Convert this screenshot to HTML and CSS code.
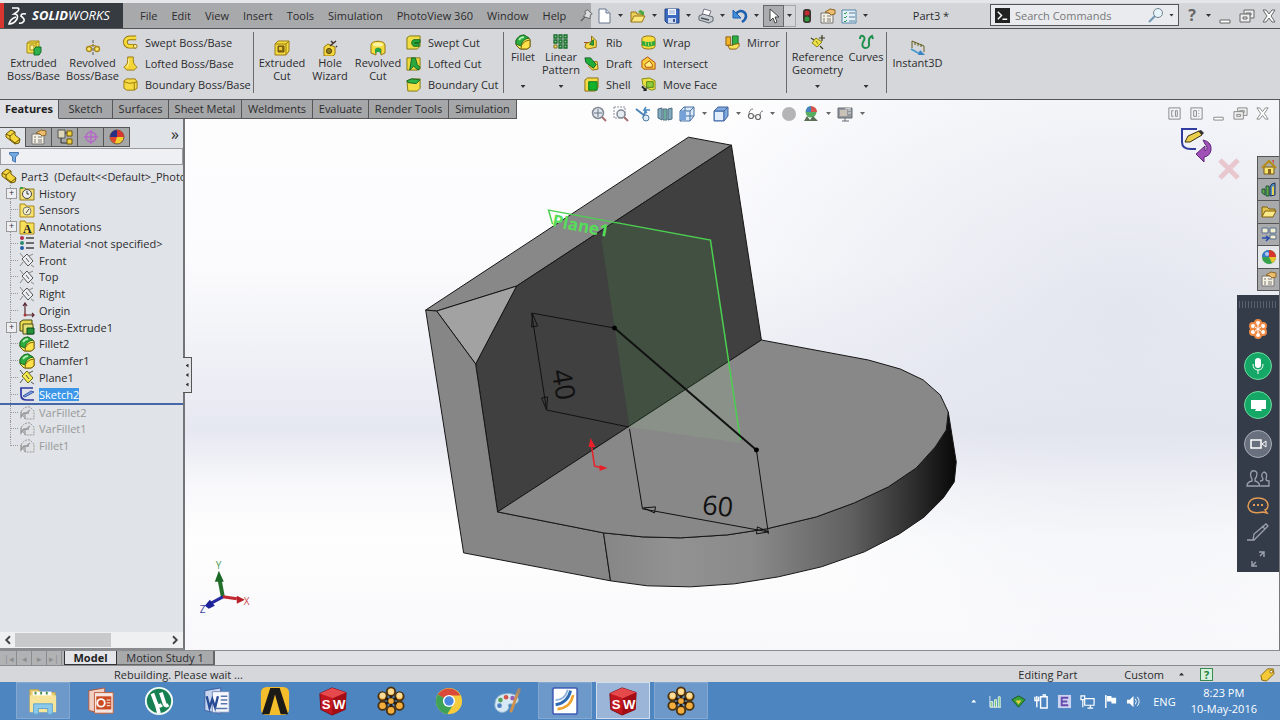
FILE: index.html
```html
<!DOCTYPE html>
<html lang="en">
<head>
    <meta charset="UTF-8">
    <meta name="viewport" content="width=device-width, initial-scale=1.0">
    <title>SolidWorks - Part3</title>
    <link rel="stylesheet" href="styles.css">
</head>
<body>
    <!-- Shared icons -->
    <svg class="sprite" aria-hidden="true">
        <symbol id="i-extrude" viewBox="0 0 16 16"><path d="M1 3l3-2h9v9l-3 3H1z" fill="#f3df4c" stroke="#a58a15"/><path d="M1 3h9v10M10 3l3-2" fill="none" stroke="#a58a15"/><path d="M4 5h4v5H4z" fill="#fbf3a0" stroke="#a58a15"/><path d="M8 9l2-2h5v5l-2 3H8z" fill="#2eb14c" stroke="#15702a"/></symbol>
        <symbol id="i-revolve" viewBox="0 0 16 16"><path d="M8 0v16" stroke="#555" stroke-dasharray="3 1"/><circle cx="4" cy="9" r="2.500" fill="#f8e96c" stroke="#a8821a" stroke-width="1.300"/><circle cx="12" cy="9" r="2.500" fill="#f8e96c" stroke="#a8821a" stroke-width="1.300"/><path d="M5 6q3-2 6 0" fill="none" stroke="#b8901a"/></symbol>
        <symbol id="i-sweep" viewBox="0 0 16 16"><path d="M14 3H7a4.500 4.500 0 0 0 0 9h7" fill="none" stroke="#96750e" stroke-width="5"/><path d="M14 3H7a4.500 4.500 0 0 0 0 9h7" fill="none" stroke="#f7dd3c" stroke-width="3"/><circle cx="13" cy="12" r="2" fill="#fbf0a0" stroke="#96750e"/></symbol>
        <symbol id="i-loft" viewBox="0 0 16 16"><path d="M5 1h6v3c0 4 1 5 4 8l-3 3H4l-3-3c3-3 4-4 4-8z" fill="#f4d538" stroke="#99770f"/><path d="M6 3v5l-2 4" fill="none" stroke="#fff6b0"/></symbol>
        <symbol id="i-bound" viewBox="0 0 16 16"><path d="M1 4l3-2h9l2 3v7l-3 2H4l-3-2z" fill="#f5da42" stroke="#99770f"/><path d="M1 5q6 3 11 1v8M12 6l3-1" fill="none" stroke="#99770f"/></symbol>
        <symbol id="i-cut" viewBox="0 0 16 16"><path d="M1 4l3-3h11v10l-3 4H1z" fill="#f5dc3e" stroke="#9c7b10"/><path d="M1 4h11v11M12 4l3-3" fill="none" stroke="#9c7b10"/><path d="M4 6h6v6H4z" fill="#917014" stroke="#6a5210"/><path d="M5 7h3v3H5z" fill="#e8c93a"/></symbol>
        <symbol id="i-hole" viewBox="0 0 16 16"><path d="M2 7l4-3 7 3v7l-2 2H2z" fill="#f5d740" stroke="#9c7b10"/><circle cx="7" cy="11" r="2.600" fill="#8e7a22" stroke="#5c4a0c"/><path d="M8 6l6-5M9 1l2 2M14 6l1 1" stroke="#43332c" stroke-width="1.500"/></symbol>
        <symbol id="i-revcut" viewBox="0 0 16 16"><path d="M1 5c0-5 14-5 14 0v8l-4 2V9H6v6l-5-2z" fill="#f5dc3e" stroke="#9c7b10"/><path d="M5 14V9q3-3 6 0v5l-2-2H7z" fill="#2ba544"/><ellipse cx="8" cy="4.500" rx="5" ry="2" fill="#fdf3a0"/></symbol>
        <symbol id="i-swcut" viewBox="0 0 16 16"><path d="M1 3l3-2h11v11l-3 3H1z" fill="#f0dc45" stroke="#7f7710"/><path d="M15 5H8q-4 3 0 7h6v-3H9V8h6z" fill="#25a83c" stroke="#116622"/></symbol>
        <symbol id="i-locut" viewBox="0 0 16 16"><path d="M1 2h14v12l-3 1H1z" fill="#f0d93d" stroke="#7f7710"/><path d="M6 2h4l2 7 3 3-2 3-5-4-4 4 1-7z" fill="#29a840" stroke="#116622"/></symbol>
        <symbol id="i-bocut" viewBox="0 0 16 16"><path d="M1 4l5-2h9v10l-3 3H2z" fill="#f4df46" stroke="#7f7710"/><path d="M1 4l5-2 9 1-4 4-9-1z" fill="#2fb247" stroke="#116622"/></symbol>
        <symbol id="i-fillet" viewBox="0 0 16 16"><path d="M1 6q3-5 8-5l6 4v8l-3 2H5l-4-4z" fill="#fae75c" stroke="#5f5a10"/><path d="M1 7q2-6 8-6l5 3q-7 1-8 8l-5-2z" fill="#2eac3f" stroke="#15702a"/><path d="M6 15q0-8 9-9v7l-3 2z" fill="#ffe24a" stroke="#7f6810"/><path d="M4 6q2-3 5-3" fill="none" stroke="#b9f0bb" stroke-width="1.500"/></symbol>
        <symbol id="i-pattern" viewBox="0 0 16 16"><g fill="#7fd08e" stroke="#176a2a" stroke-width="1.300"><path d="M1 1h3v3H1zM6 1h3v3H6zM11 1h3v3h-3zM1 6h3v3H1zM6 6h3v3H6zM11 6h3v3h-3zM6 11h3v3H6zM11 11h3v3h-3z"/></g><path d="M1 11h3v3H1z" fill="#f7e978" stroke="#7e6f16"/></symbol>
        <symbol id="i-rib" viewBox="0 0 16 16"><path d="M2 9l6-2V1l5 5v7l-9 2-3-2z" fill="#f5d948" stroke="#8e6c0e"/><path d="M6 10l4-5v6z" fill="#2fa943" stroke="#15702a"/><path d="M0 8h4" stroke="#a54315"/></symbol>
        <symbol id="i-draft" viewBox="0 0 16 16"><path d="M8 6h6l1 8-6 1-4-4z" fill="#f6dc46" stroke="#8e6c0e"/><path d="M1 2h6l6 7-3 4-8-6z" fill="#1fae3a" stroke="#126124"/></symbol>
        <symbol id="i-shell" viewBox="0 0 16 16"><path d="M1 3l3-2h11v10l-3 4H1z" fill="#f4dc42" stroke="#8e6c0e"/><path d="M5 5h9v9H5z" fill="#14b32b" stroke="#0f7420"/></symbol>
        <symbol id="i-wrap" viewBox="0 0 16 16"><path d="M1 4c0-4 14-4 14 0v8c0 4-14 4-14 0z" fill="#f8dd3c" stroke="#8e6c0e"/><path d="M1 6q7 3 14 0v5q-7 3-14 0z" fill="#2fa93c"/><path d="M5 7v4M8 8v4M11 7v4" stroke="#bddd55"/></symbol>
        <symbol id="i-inter" viewBox="0 0 16 16"><path d="M1 5l6-4 8 6v7H3l-2-2z" fill="#f7cf3a" stroke="#b0470e"/><path d="M4 9l5-4 3 4v3H5z" fill="#ffef84" stroke="#b0470e"/></symbol>
        <symbol id="i-move" viewBox="0 0 16 16"><path d="M1 2l8-1 6 3v9l-4 1-6-3-3-3z" fill="#ecdf42" stroke="#7e8a10"/><path d="M6 5h7v6H6z" fill="#8fce39" stroke="#4c7f17"/><path d="M1 10l4 4" stroke="#222" stroke-width="2"/><path d="M2 15h4v-4z" fill="#222"/></symbol>
        <symbol id="i-mirror" viewBox="0 0 16 16"><path d="M1 2h5v9H1z" fill="#f2b52a" stroke="#8f5b0b"/><path d="M8 1h6v8l-2 2H8z" fill="#2fae43" stroke="#15702a"/><path d="M3 11h5l2-1 5-1v3l-3 3H5z" fill="#f9e35a" stroke="#8f5b0b"/></symbol>
        <symbol id="i-refgeo" viewBox="0 0 16 16"><path d="M6 4l6 4-5 5-5-4z" fill="#ece248" stroke="#8b8213"/><path d="M1 4l3 2M10 12l3 3M12 1v6M9 4h6" stroke="#3d3d20" stroke-width="1.200"/><path d="M6 7l2 3" stroke="#8b8213"/></symbol>
        <symbol id="i-curve" viewBox="0 0 16 16"><path d="M2 5q0-4 3-3 3 2 0 6-2 5 2 6 5 0 4-5-1-5 3-7l1 3" fill="none" stroke="#1f8f4c" stroke-width="2"/></symbol>
        <symbol id="i-instant" viewBox="0 0 16 16"><path d="M2 8V1l12 5v6M5 2v3M8 3v3M11 4v3" fill="none" stroke="#655c1c"/><path d="M1 9l9 5" stroke="#4a9ad0" stroke-width="2"/><path d="M10 10l5 5H8z" fill="#3a86c4"/></symbol>
        <symbol id="i-new" viewBox="0 0 16 16"><path d="M3 1h7l4 4v10H3z" fill="#fff" stroke="#68778d"/><path d="M10 1v4h4" fill="#cddcee" stroke="#68778d"/></symbol>
        <symbol id="i-open" viewBox="0 0 16 16"><path d="M1 14V4h5l1 2h6v3" fill="#ead05a" stroke="#987416"/><path d="M1 14l3-6h11l-3 6z" fill="#fbe77e" stroke="#987416"/><path d="M8 4q3-4 5 0l1-1v4h-4l2-1" fill="#47a83c"/></symbol>
        <symbol id="i-openfolder" viewBox="0 0 16 16"><path d="M1 13V3h5l2 2h6v3" fill="#e2c34f" stroke="#806010"/><path d="M1 13l3-6h11l-3 6z" fill="#fbe98a" stroke="#806010"/></symbol>
        <symbol id="i-save" viewBox="0 0 16 16"><path d="M1 1h14v14H3l-2-2z" fill="#3b6bc0" stroke="#25437e"/><path d="M4 1h8v6H4z" fill="#f3f6fc"/><path d="M5 3h6M5 5h6" stroke="#93a9cf"/><path d="M4 10h8v5H4z" fill="#cdd9ee"/><path d="M9 11h2v3H9z" fill="#3b5489"/></symbol>
        <symbol id="i-print" viewBox="0 0 16 16"><path d="M4 7l2-6 7 2-2 5z" fill="#fff" stroke="#778"/><path d="M1 8l4-2 10 3v4l-4 2-10-3z" fill="#c7cbd2" stroke="#5f656e"/><path d="M3 10l8 2" stroke="#4d5258" stroke-width="1.500"/></symbol>
        <symbol id="i-undo" viewBox="0 0 16 16"><path d="M3 7q5-7 10-2 3 5-3 9" fill="none" stroke="#1d5eae" stroke-width="2.500"/><path d="M1 2v8h8z" fill="#408fd9" stroke="#1d5eae"/></symbol>
        <symbol id="i-arrow" viewBox="0 0 16 16"><path d="M4 1v12l3-3 2 5 2-1-2-5h4z" fill="#fff" stroke="#444"/></symbol>
        <symbol id="i-light" viewBox="0 0 16 16"><rect x="4" y="1" width="8" height="14" rx="3" fill="#3b342e"/><circle cx="8" cy="5" r="2.500" fill="#c02b2f"/><circle cx="8" cy="11" r="2.500" fill="#2c9a3d"/></symbol>
        <symbol id="i-props" viewBox="0 0 16 16"><path d="M1 5h12v10H1z" fill="#f4f0e2" stroke="#777"/><path d="M3 8h2M7 8h4M3 11h2M7 11h4M3 13h2M7 13h4" stroke="#7b7b7b"/><path d="M5 4l5-3 5 1v4l-4 1-2-2z" fill="#ecbd6e" stroke="#8e6726"/></symbol>
        <symbol id="i-options" viewBox="0 0 16 16"><path d="M1 2h14v13H1z" fill="#e4f0f8" stroke="#5786a7"/><path d="M3 5l1 1 2-2M3 9l1 1 2-2M3 13l1 1 2-2" fill="none" stroke="#2c9a4d"/><path d="M8 5h6M8 9h6M8 13h6" stroke="#5d7f9c"/></symbol>
        <symbol id="i-glass" viewBox="0 0 16 16"><circle cx="10" cy="6" r="4.500" fill="#e6f4fb" stroke="#75838e"/><path d="M7 9l-6 6" stroke="#6e97b4" stroke-width="2"/></symbol>
        <symbol id="i-zoomfit" viewBox="0 0 16 16"><circle cx="7" cy="7" r="5.500" fill="#dfe6ee" stroke="#808893" stroke-width="1.500"/><path d="M7 3v8M3 7h8" stroke="#687280"/><path d="M11 11l4 4" stroke="#a66f6f" stroke-width="2"/></symbol>
        <symbol id="i-zoomarea" viewBox="0 0 16 16"><path d="M1 1h11v11H1z" fill="none" stroke="#8a919b" stroke-dasharray="2 1"/><circle cx="8" cy="8" r="4" fill="#e6ecf3" stroke="#808893" stroke-width="1.500"/><path d="M11 11l4 4" stroke="#a66f6f" stroke-width="2"/></symbol>
        <symbol id="i-prev" viewBox="0 0 16 16"><path d="M1 3l9 7M8 12l3-8" stroke="#4e83b5" stroke-width="2"/><circle cx="11" cy="12" r="3" fill="#dcebf7" stroke="#5079a2"/><path d="M15 4H9l2-3M9 4l3 3" fill="none" stroke="#4a8bc4" stroke-width="1.500"/></symbol>
        <symbol id="i-section" viewBox="0 0 16 16"><path d="M1 3l4-1v12l-4-2zM6 3h4v11H6zM11 3l4-1v11l-4 1z" fill="#84a9bf" stroke="#4d6e80"/><path d="M7 4h2v9H7z" fill="#69ad98"/></symbol>
        <symbol id="i-orient" viewBox="0 0 16 16"><path d="M1 5l4-4h10v9l-4 5H1z" fill="#dbe8f7" stroke="#4570a3"/><path d="M1 5h10v10M11 5l4-4M6 1v9l-5 5M6 10h9" stroke="#4570a3" fill="none"/><path d="M1 5h6v9H1z" fill="#74a1d8"/></symbol>
        <symbol id="i-cube" viewBox="0 0 16 16"><path d="M1 5l4-4h10v9l-4 5H1z" fill="#7fa9df" stroke="#41649a"/><path d="M1 5h10v10M11 5l4-4" stroke="#41649a" fill="none"/><path d="M2 6h8v8H2z" fill="#e1edfa"/></symbol>
        <symbol id="i-glasses" viewBox="0 0 16 16"><circle cx="4" cy="10" r="2.500" fill="none" stroke="#666" stroke-width="1.200"/><circle cx="11" cy="11" r="2.500" fill="none" stroke="#666" stroke-width="1.200"/><path d="M2 9q0-6 4-6M13 10q0-5 3-5M6 10h3" fill="none" stroke="#777"/></symbol>
        <symbol id="i-ball" viewBox="0 0 16 16"><circle cx="8" cy="8" r="7" fill="#b4b4b6"/></symbol>
        <symbol id="i-colors" viewBox="0 0 16 16"><circle cx="8" cy="8" r="7" fill="#f4ce2f" stroke="#6c5140"/><path d="M8 8V1a7 7 0 0 1 7 7z" fill="#d8352f"/><path d="M8 8V1a7 7 0 0 0-7 7z" fill="#252f83"/><path d="M8 8H1a7 7 0 0 0 5 6z" fill="#e04634"/></symbol>
        <symbol id="i-globe" viewBox="0 0 16 16"><circle cx="8" cy="8" r="7" fill="#36a24c"/><path d="M8 8V1a7 7 0 0 1 7 7z" fill="#d8352f"/><path d="M8 8V1a7 7 0 0 0-7 7z" fill="#3a78cf"/><path d="M8 8h7a7 7 0 0 1-4 6z" fill="#e8c32f"/><circle cx="6" cy="5" r="2" fill="#fff" fill-opacity=".6"/></symbol>
        <symbol id="i-scene" viewBox="0 0 16 16"><circle cx="8" cy="6" r="5.500" fill="#59ad60"/><path d="M8 6V0q-5 0-5 6z" fill="#4383c2"/><path d="M8 6V0q6 1 6 6z" fill="#d5544c"/><path d="M1 15l3-5 3 4 3-4 5 5z" fill="#5c6e53"/></symbol>
        <symbol id="i-monitor" viewBox="0 0 16 16"><path d="M1 2h14v10H1z" fill="#92989e" stroke="#646a70"/><path d="M3 4h7v6H3z" fill="#c9c2b6"/><path d="M11 4h3M11 7h3M8 3l6-1" stroke="#ddd"/><path d="M5 15h7M8 12v3" stroke="#646a70" fill="none"/></symbol>
        <symbol id="i-min" viewBox="0 0 16 16"><path d="M3 12h10v3H3z" fill="#fff" stroke="currentColor"/></symbol>
        <symbol id="i-restore" viewBox="0 0 16 16"><path d="M5 2h10v8H5zM7 5h5v2H7z" fill="#eee" stroke="currentColor"/><path d="M1 6h10v8H1zM4 9h4v2H4z" fill="#eee" stroke="currentColor"/></symbol>
        <symbol id="i-close" viewBox="0 0 16 16"><path d="M2 2h3l3 4 3-4h3l-4 6 4 6h-3l-3-4-3 4H2l4-6z" fill="#fff" stroke="currentColor"/></symbol>
        <symbol id="i-paneL" viewBox="0 0 16 16"><path d="M2 2h12v12H2z" fill="none" stroke="currentColor"/><path d="M7 5H5v6h2M9 5h2v6H9z" fill="none" stroke="currentColor"/></symbol>
        <symbol id="i-paneR" viewBox="0 0 16 16"><path d="M2 2h12v12H2z" fill="none" stroke="currentColor"/><path d="M5 5h3v6H5zM10 5h1M10 8h1M10 11h1" fill="none" stroke="currentColor"/></symbol>
        <symbol id="i-part" viewBox="0 0 16 16"><path d="M1 5l5-4 4 2v3l5 4-1 4-4 1-9-7z" fill="#f5d63b" stroke="#6c5708"/><path d="M1 5l4 2 5-4M5 7v3l5 4 5-4M10 14v1" fill="none" stroke="#6c5708"/></symbol>
        <symbol id="i-config" viewBox="0 0 16 16"><path d="M1 1h7v8H1z" fill="#ded9bd" stroke="#555"/><path d="M4 9v5h6M8 4h3" fill="none" stroke="#333"/><path d="M10 2h5v5h-5zM10 10h5v5h-5z" fill="#f0d341" stroke="#6c5708"/></symbol>
        <symbol id="i-target" viewBox="0 0 16 16"><circle cx="8" cy="8" r="5" fill="none" stroke="#b568c8" stroke-width="1.500"/><path d="M8 1v14M1 8h14" stroke="#b568c8" stroke-width="1.500"/></symbol>
        <symbol id="i-filter" viewBox="0 0 16 16"><path d="M2 2h12v2L10 8v7l-4-2V8L2 4z" fill="#6fa9e0" stroke="#2a5b9c"/></symbol>
        <symbol id="i-history" viewBox="0 0 16 16"><path d="M1 3h5l1 1h8v11H1z" fill="#f4df6e" stroke="#8d7a24"/><circle cx="8" cy="9" r="4.500" fill="#eee" stroke="#444"/><path d="M8 6v3h2" fill="none" stroke="#333"/><path d="M1 2h3v2H1z" fill="#35a048"/></symbol>
        <symbol id="i-sensor" viewBox="0 0 16 16"><path d="M1 2h5l1 2h8v11H1z" fill="#f7e36e" stroke="#a8861e"/><circle cx="8" cy="9" r="4" fill="#f4f0cf" stroke="#7b7b6d"/><path d="M7 11l3-4" stroke="#444"/></symbol>
        <symbol id="i-folder" viewBox="0 0 16 16"><path d="M1 2h5l1 2h8v11H1z" fill="#f7e05a" stroke="#a8861e"/></symbol>
        <symbol id="i-material" viewBox="0 0 16 16"><circle cx="3" cy="3" r="2" fill="#b12d4a"/><circle cx="3" cy="8" r="2" fill="#2c8c72"/><circle cx="3" cy="13" r="2" fill="#255fa8"/><path d="M7 3h8M7 8h8M7 13h8" stroke="#444" stroke-width="1.500"/></symbol>
        <symbol id="i-plane" viewBox="0 0 16 16"><path d="M8 2l6 7-5 5-6-7z" fill="#eceff1" stroke="#555"/><path d="M1 1l3 4M12 13l3 2M14 2l-4 2M1 14l3-4" stroke="#888"/><path d="M7 6l3 4" stroke="#555"/></symbol>
        <symbol id="i-planeY" viewBox="0 0 16 16"><path d="M8 2l6 7-5 5-6-7z" fill="#f2ea4d" stroke="#6d6716"/><path d="M1 1l3 4M12 13l3 2M14 2l-4 2M1 14l3-4M7 6l3 4" stroke="#555"/></symbol>
        <symbol id="i-origin" viewBox="0 0 16 16"><path d="M6 2v11h9M4 4l2-3 2 3M13 11l2 2-2 2" fill="none" stroke="#5b2731" stroke-width="1.200"/><circle cx="6" cy="13" r="1.500" fill="#a33"/></symbol>
        <symbol id="i-boss" viewBox="0 0 16 16"><path d="M1 3l3-2h9v11H1z" fill="#e9da52" stroke="#4a4a13"/><path d="M4 5h10v10H4z" fill="#e5df78" stroke="#4a4a13"/><path d="M8 9h7v6H8z" fill="#26903b" stroke="#0d4e1b"/></symbol>
        <symbol id="i-sketch" viewBox="0 0 16 16"><path d="M14 2H2v7q0 5 6 5h7" fill="none" stroke="#2d37a3" stroke-width="1.700"/><path d="M4 10l8-5 3 1-9 5z" fill="#7da1df" stroke="#3e5baa"/></symbol>
        <symbol id="i-ghost" viewBox="0 0 16 16"><path d="M2 7q3-6 9-5l4 4v8H6z" fill="#dfe1e4" stroke="#999" stroke-dasharray="2 1"/><path d="M2 7v5l3-4h5M6 14V9l5-4" fill="none" stroke="#999" stroke-width="1.300"/></symbol>
        <symbol id="i-house" viewBox="0 0 16 16"><path d="M3 8h10v7H3z" fill="#f8e36b" stroke="#775812"/><path d="M1 9l7-7 7 7" fill="none" stroke="#b58c16" stroke-width="2"/><path d="M7 10h3v5H7z" fill="#8c6420"/><path d="M11 1h2v4z" fill="#c44"/></symbol>
        <symbol id="i-books" viewBox="0 0 16 16"><path d="M1 8h3v6l-3-2zM5 5h3v10H5z" fill="#60a843" stroke="#254"/><path d="M9 15V6q1-4 5-4v12z" fill="#4f8cc4" stroke="#235"/><path d="M11 14V6l2-1v9z" fill="#e8d352"/></symbol>
        <symbol id="i-viewpal" viewBox="0 0 16 16"><path d="M1 2h6v5H1zM9 2h6v5H9zM9 9h6v4H9z" fill="#f4efcc" stroke="#546c91"/><path d="M1 12h6M5 10l3 2-3 3" stroke="#2b4cae" stroke-width="1.500" fill="none"/></symbol>
        <symbol id="i-flower" viewBox="0 0 32 32"><g fill="#f4ae3b" stroke="#4a3416" stroke-width="2"><circle cx="16" cy="6" r="4.500"/><circle cx="25" cy="11" r="4.500"/><circle cx="25" cy="21" r="4.500"/><circle cx="16" cy="26" r="4.500"/><circle cx="7" cy="21" r="4.500"/><circle cx="7" cy="11" r="4.500"/></g><g fill="#fbdc98"><circle cx="16" cy="6" r="3"/><circle cx="7" cy="10" r="3"/><circle cx="25" cy="10" r="3"/></g><path d="M16 10v12M10 13l12 6M22 13l-12 6" stroke="#2b1c0d" stroke-width="3"/><circle cx="16" cy="16" r="3" fill="#f4ae3b"/></symbol>
        <symbol id="i-swbox" viewBox="0 0 32 32"><path d="M2 8l13-6 15 5-1 18-14 6L3 25z" fill="#c31720" stroke="#7b0b12"/><path d="M2 8l13-6 15 5-14 6z" fill="#e6494c"/><path d="M16 13l14-6-1 18-14 6z" fill="#a30d16"/></symbol>
    </svg>

    <div class="app">
        <!-- Title bar -->
        <header class="titlebar">
            <div class="brand">
                <svg class="brand-mark" viewBox="0 0 20 20"><path d="M4 2h6q2 1-1 4l-3 2q5 0 3 5-3 5-8 5 1-5 7-7M18 8q-5-1-5 2 4 3 3 5-2 3-5 2" fill="none" stroke="#fff" stroke-width="1.600"/></svg>
                <span class="brand-name"><b>SOLID</b>WORKS</span>
            </div>
            <nav class="menu">
                <button>File</button>
                <button>Edit</button>
                <button>View</button>
                <button>Insert</button>
                <button>Tools</button>
                <button>Simulation</button>
                <button>PhotoView 360</button>
                <button>Window</button>
                <button>Help</button>
                <svg class="pin" viewBox="0 0 16 16"><path d="M9 1l6 5-2 1-1 5-8-3 3-3-1-3z" fill="#ddd" stroke="#555"/><path d="M6 10l-5 5" stroke="#555" stroke-width="1.500"/></svg>
            </nav>
            <div class="quick">
                <button aria-label="New"><svg class="icon"><use href="#i-new"/></svg></button><i class="caret"></i>
                <button aria-label="Open"><svg class="icon"><use href="#i-open"/></svg></button><i class="caret"></i>
                <button aria-label="Save"><svg class="icon"><use href="#i-save"/></svg></button><i class="caret"></i>
                <button aria-label="Print"><svg class="icon"><use href="#i-print"/></svg></button><i class="caret"></i>
                <button aria-label="Undo"><svg class="icon"><use href="#i-undo"/></svg></button><i class="caret"></i>
                <button class="pressed" aria-label="Select"><svg class="icon"><use href="#i-arrow"/></svg></button><span class="boxed"><i class="caret"></i></span>
                <button aria-label="Rebuild"><svg class="icon"><use href="#i-light"/></svg></button>
                <button aria-label="Properties"><svg class="icon"><use href="#i-props"/></svg></button>
                <button aria-label="Options"><svg class="icon"><use href="#i-options"/></svg></button><i class="caret"></i>
            </div>
            <div class="doc-title">Part3 *</div>
            <div class="search">
                <svg class="prompt" viewBox="0 0 16 16"><path d="M0 0h16v16H0z" fill="#222"/><path d="M3 4l4 4-4 4M8 12h5" fill="none" stroke="#fff" stroke-width="1.500"/></svg>
                <input type="text" aria-label="Search Commands" placeholder="Search Commands">
                <svg class="icon"><use href="#i-glass"/></svg><i class="caret"></i>
            </div>
            <div class="win-controls">
                <button class="help-mark" aria-label="Help">?</button><i class="caret"></i>
                <button aria-label="Minimize"><svg class="icon"><use href="#i-min"/></svg></button>
                <button aria-label="Restore"><svg class="icon"><use href="#i-restore"/></svg></button>
                <button aria-label="Close"><svg class="icon"><use href="#i-close"/></svg></button>
            </div>
        </header>

        <!-- Ribbon -->
        <section class="ribbon">
            <div class="group">
                <button class="big mid wide"><svg class="icon"><use href="#i-extrude"/></svg>Extruded<br>Boss/Base</button>
                <button class="big mid wide"><svg class="icon"><use href="#i-revolve"/></svg>Revolved<br>Boss/Base</button>
                <div class="stack stack-xl">
                    <button><svg class="icon"><use href="#i-sweep"/></svg>Swept Boss/Base</button>
                    <button><svg class="icon"><use href="#i-loft"/></svg>Lofted Boss/Base</button>
                    <button><svg class="icon"><use href="#i-bound"/></svg>Boundary Boss/Base</button>
                </div>
            </div>
            <div class="group">
                <button class="big mid"><svg class="icon"><use href="#i-cut"/></svg>Extruded<br>Cut</button>
                <button class="big mid"><svg class="icon"><use href="#i-hole"/></svg>Hole<br>Wizard</button>
                <button class="big mid"><svg class="icon"><use href="#i-revcut"/></svg>Revolved<br>Cut</button>
                <div class="stack stack-l">
                    <button><svg class="icon"><use href="#i-swcut"/></svg>Swept Cut</button>
                    <button><svg class="icon"><use href="#i-locut"/></svg>Lofted Cut</button>
                    <button><svg class="icon"><use href="#i-bocut"/></svg>Boundary Cut</button>
                </div>
            </div>
            <div class="group">
                <button class="big narrow"><svg class="icon"><use href="#i-fillet"/></svg>Fillet<i class="caret"></i></button>
                <button class="big narrow"><svg class="icon"><use href="#i-pattern"/></svg>Linear<br>Pattern<i class="caret"></i></button>
                <div class="stack stack-s">
                    <button><svg class="icon"><use href="#i-rib"/></svg>Rib</button>
                    <button><svg class="icon"><use href="#i-draft"/></svg>Draft</button>
                    <button><svg class="icon"><use href="#i-shell"/></svg>Shell</button>
                </div>
                <div class="stack stack-m">
                    <button><svg class="icon"><use href="#i-wrap"/></svg>Wrap</button>
                    <button><svg class="icon"><use href="#i-inter"/></svg>Intersect</button>
                    <button><svg class="icon"><use href="#i-move"/></svg>Move Face</button>
                </div>
                <div class="stack stack-r">
                    <button><svg class="icon"><use href="#i-mirror"/></svg>Mirror</button>
                </div>
            </div>
            <div class="group">
                <button class="big wide"><svg class="icon"><use href="#i-refgeo"/></svg>Reference<br>Geometry<i class="caret"></i></button>
                <button class="big narrow"><svg class="icon"><use href="#i-curve"/></svg>Curves<i class="caret"></i></button>
            </div>
            <div class="group">
                <button class="big mid wide"><svg class="icon"><use href="#i-instant"/></svg>Instant3D</button>
            </div>
        </section>

        <main class="workspace">
            <!-- Graphics area -->
            <div class="viewport">
                <svg class="model" viewBox="0 100 1280 550">
                    <defs>
                        <linearGradient id="rim" gradientUnits="userSpaceOnUse" x1="605" y1="0" x2="957" y2="0">
                            <stop offset="0" stop-color="#868686"/>
                            <stop offset=".2" stop-color="#929292"/>
                            <stop offset=".42" stop-color="#8a8a8a"/>
                            <stop offset=".7" stop-color="#606060"/>
                            <stop offset=".87" stop-color="#303030"/>
                            <stop offset="1" stop-color="#080808"/>
                        </linearGradient>
                    </defs>
                    <g stroke="#151515" stroke-linejoin="round">
                        <path d="M426 310L689 137L732 145L517 286L437 311z" fill="#888"/>
                        <path d="M732 145L762 340L498 512L476 364L517 286z" fill="#404040"/>
                        <path d="M437 311L517 286L476 364z" fill="#a2a2a2"/>
                        <path d="M426 310L437 311L476 364L498 512L604 533L611 581L464 553z" fill="#868686"/>
                        <path d="M604 533L643 537L681 538L728 535L767 529L817 517L855 503L889 487L917 468L936 447L947 430L949 412L957 462L955 482L944 498L925 517L900 534L865 552L822 567L779 577L735 584L691 587L648 586L611 581z" fill="url(#rim)"/>
                        <path d="M498 512L762 340L869 360L901 369L924 380L941 395L949 412L947 430L936 447L917 468L889 487L855 503L817 517L767 529L728 535L681 538L643 537L604 533z" fill="#888"/>
                    </g>
                    <!-- Reference plane -->
                    <path d="M602 240L610 222L711 240L729 362L630 427z" fill="#46b446" fill-opacity=".14"/>
                    <path d="M630 427L729 362L741 443z" fill="#8fd08f" fill-opacity=".13"/>
                    <path d="M553 224L549 210L711 240L741 440" fill="none" stroke="#4ccf50" stroke-width="1.500"/>
                    <text class="plane-label" transform="translate(552 226) rotate(11)">Plane1</text>
                    <!-- Sketch and dimensions -->
                    <g fill="none" stroke="#111">
                        <path d="M615 328L532 313L547 410L629 427M630 429L643 509L769 532M757 450L769 534"/>
                        <path d="M533 314l-1 13 6-1zM547 410l-5-12 6-1zM644 508l12-1-1 6zM769 532l-12 2 1-7z"/>
                        <path d="M615 328L757 450" stroke-width="2"/>
                    </g>
                    <circle cx="615" cy="328" r="2.500"/>
                    <circle cx="757" cy="450" r="2.500"/>
                    <text class="dimension" transform="translate(552 371) rotate(80)">40</text>
                    <text class="dimension" transform="translate(702 514) rotate(6)">60</text>
                    <path d="M592 446L595 466L602 468" fill="none" stroke="#e8202a" stroke-width="1.500"/>
                    <path d="M591 438l5 9h-7zM608 468l-8 3v-6z" fill="#e8202a"/>
                    <!-- Triad -->
                    <path d="M223 597L220 581" stroke="#24702c" stroke-width="4"/>
                    <path d="M219 571l5 11h-9z" fill="#1b6827"/>
                    <path d="M223 597L237 599" stroke="#c22831" stroke-width="3"/>
                    <path d="M245 600l-8 4v-8z" fill="#b91f29"/>
                    <path d="M223 597L210 604" stroke="#252aa0" stroke-width="3"/>
                    <path d="M205 606l5-6 5 6-6 3z" fill="#1d2299"/>
                    <g class="axis"><text x="216" y="569" fill="#4a9a50">Y</text><text x="244" y="605" fill="#c84b50">X</text><text x="200" y="613" fill="#3a3f9c">Z</text></g>
                </svg>

                <div class="confirm">
                    <svg class="confirm-exit" viewBox="0 0 32 36"><path d="M17 2H2v13q0 7 9 7h5" fill="none" stroke="#303c9e" stroke-width="2"/><path d="M5 15l3-6 11-5 3 4-12 7z" fill="#ead04a" stroke="#3a3011"/><path d="M18 4l3-1 3 3-2 2z" fill="#333"/><path d="M23 13q9 2 8 10-1 6-7 7v5l-8-8 9-8v5q4-3 0-7z" fill="#a150b8" stroke="#5f277a"/></svg>
                    <svg class="confirm-cancel" viewBox="0 0 24 24"><path d="M3 3l18 18M21 3L3 21" stroke="#e8c8ce" stroke-width="5"/></svg>
                </div>

                <div class="task-pane">
                    <button aria-label="Resources"><svg class="icon"><use href="#i-house"/></svg></button>
                    <button aria-label="Design Library"><svg class="icon"><use href="#i-books"/></svg></button>
                    <button aria-label="File Explorer"><svg class="icon"><use href="#i-openfolder"/></svg></button>
                    <button aria-label="View Palette"><svg class="icon"><use href="#i-viewpal"/></svg></button>
                    <button class="active" aria-label="Appearances"><svg class="icon"><use href="#i-globe"/></svg></button>
                    <button aria-label="Custom Properties"><svg class="icon"><use href="#i-props"/></svg></button>
                </div>

                <div class="meeting">
                    <div class="grip"></div>
                    <button aria-label="Meeting"><svg viewBox="0 0 20 20"><g fill="#fff" stroke="#ef8a45" stroke-width="2"><circle cx="10" cy="4" r="3"/><circle cx="15" cy="7" r="3"/><circle cx="15" cy="13" r="3"/><circle cx="10" cy="16" r="3"/><circle cx="5" cy="13" r="3"/><circle cx="5" cy="7" r="3"/></g><circle cx="10" cy="10" r="4" fill="#ef8a45"/><path d="M10 6v8M7 8l6 4M13 8l-6 4" stroke="#fff"/></svg></button>
                    <button class="round on" aria-label="Mute"><svg viewBox="0 0 20 20"><rect x="7" y="2" width="6" height="10" rx="3" fill="#fff"/><path d="M5 8q0 6 5 6t5-6M10 14v4" fill="none" stroke="#fff"/></svg></button>
                    <button class="round on" aria-label="Screen"><svg viewBox="0 0 20 20"><path d="M3 5h15v9h-5l1 2H7l1-2H3z" fill="#fff"/></svg></button>
                    <button class="round" aria-label="Webcam"><svg viewBox="0 0 20 20"><path d="M3 6h10v8H3z" fill="none" stroke="#fff" stroke-width="1.500"/><path d="M14 10l4-3v6z" fill="none" stroke="#fff"/></svg></button>
                    <button class="flat" aria-label="People"><svg viewBox="0 0 24 20"><path d="M1 18q0-4 5-5v-2q-3-5 0-8 4-1 5 2 0 4-2 6v2q4 1 5 5zM14 13q3 0 3-2-3-5 1-7 4 1 2 7 0 2 3 2v5h-8" fill="none" stroke="#9aa1ab" stroke-width="1.300"/></svg></button>
                    <button class="flat" aria-label="Chat"><svg viewBox="0 0 24 20"><path d="M17 17q-14 3-15-6 1-8 10-8t10 7q0 4-3 5l2 3z" fill="none" stroke="#e39a52" stroke-width="1.500"/><path d="M7 10h2M11 10h2M15 10h2" stroke="#e39a52" stroke-width="2"/></svg></button>
                    <button class="flat" aria-label="Draw"><svg viewBox="0 0 24 20"><path d="M1 18h7l11-11 3-3-2-2-12 10-1 6M16 4l3 3" fill="none" stroke="#9aa1ab" stroke-width="1.300"/></svg></button>
                    <button class="flat" aria-label="Expand"><svg viewBox="0 0 24 20"><path d="M13 3h5v5M18 3l-4 4M11 17H6v-5M6 17l4-4" fill="none" stroke="#9aa1ab" stroke-width="1.500"/></svg></button>
                </div>
            </div>

            <!-- Command tabs and view toolbar -->
            <div class="top-row">
                <div class="cmd-tabs">
                    <button class="active">Features</button>
                    <button>Sketch</button>
                    <button>Surfaces</button>
                    <button>Sheet Metal</button>
                    <button>Weldments</button>
                    <button>Evaluate</button>
                    <button>Render Tools</button>
                    <button>Simulation</button>
                </div>
                <div class="heads-up">
                    <button aria-label="Zoom to Fit"><svg class="icon"><use href="#i-zoomfit"/></svg></button>
                    <button aria-label="Zoom to Area"><svg class="icon"><use href="#i-zoomarea"/></svg></button>
                    <button aria-label="Previous View"><svg class="icon"><use href="#i-prev"/></svg></button>
                    <button aria-label="Section View"><svg class="icon"><use href="#i-section"/></svg></button>
                    <button aria-label="View Orientation"><svg class="icon"><use href="#i-orient"/></svg></button><i class="caret"></i>
                    <button aria-label="Display Style"><svg class="icon"><use href="#i-cube"/></svg></button><i class="caret"></i>
                    <button aria-label="Hide/Show"><svg class="icon"><use href="#i-glasses"/></svg></button><i class="caret"></i>
                    <button aria-label="Edit Appearance"><svg class="icon"><use href="#i-ball"/></svg></button>
                    <button aria-label="Apply Scene"><svg class="icon"><use href="#i-scene"/></svg></button><i class="caret"></i>
                    <button aria-label="View Settings"><svg class="icon"><use href="#i-monitor"/></svg></button><i class="caret"></i>
                </div>
                <div class="doc-controls">
                    <button aria-label="Left pane"><svg class="icon"><use href="#i-paneL"/></svg></button>
                    <button aria-label="Right pane"><svg class="icon"><use href="#i-paneR"/></svg></button>
                    <button aria-label="Minimize document"><svg class="icon"><use href="#i-min"/></svg></button>
                    <button aria-label="Restore document"><svg class="icon"><use href="#i-restore"/></svg></button>
                    <button aria-label="Close document"><svg class="icon"><use href="#i-close"/></svg></button>
                </div>
            </div>

            <!-- Feature manager -->
            <aside class="sidebar">
                <div class="side-tabs">
                    <button class="active" aria-label="Feature Manager"><svg class="icon"><use href="#i-part"/></svg></button>
                    <button aria-label="Property Manager"><svg class="icon"><use href="#i-props"/></svg></button>
                    <button aria-label="Configuration Manager"><svg class="icon"><use href="#i-config"/></svg></button>
                    <button aria-label="DimXpert Manager"><svg class="icon"><use href="#i-target"/></svg></button>
                    <button aria-label="Display Manager"><svg class="icon"><use href="#i-colors"/></svg></button>
                    <span class="more">»</span>
                </div>
                <div class="filter">
                    <svg class="icon small"><use href="#i-filter"/></svg>
                    <input type="text" aria-label="Filter">
                </div>
                <ul class="tree">
                    <li class="root"><svg class="icon"><use href="#i-part"/></svg><span>Part3&nbsp; (Default&lt;&lt;Default&gt;_Photo</span></li>
                    <li class="plus"><svg class="icon"><use href="#i-history"/></svg><span>History</span></li>
                    <li><svg class="icon"><use href="#i-sensor"/></svg><span>Sensors</span></li>
                    <li class="plus"><svg class="icon" viewBox="0 0 16 16"><use href="#i-folder"/><text class="note-letter" x="4" y="14">A</text></svg><span>Annotations</span></li>
                    <li><svg class="icon"><use href="#i-material"/></svg><span>Material &lt;not specified&gt;</span></li>
                    <li><svg class="icon"><use href="#i-plane"/></svg><span>Front</span></li>
                    <li><svg class="icon"><use href="#i-plane"/></svg><span>Top</span></li>
                    <li><svg class="icon"><use href="#i-plane"/></svg><span>Right</span></li>
                    <li><svg class="icon"><use href="#i-origin"/></svg><span>Origin</span></li>
                    <li class="plus"><svg class="icon"><use href="#i-boss"/></svg><span>Boss-Extrude1</span></li>
                    <li><svg class="icon"><use href="#i-fillet"/></svg><span>Fillet2</span></li>
                    <li><svg class="icon"><use href="#i-fillet"/></svg><span>Chamfer1</span></li>
                    <li><svg class="icon"><use href="#i-planeY"/></svg><span>Plane1</span></li>
                    <li class="selected"><svg class="icon"><use href="#i-sketch"/></svg><span>Sketch2</span></li>
                    <li class="ghost rollback"><svg class="icon"><use href="#i-ghost"/></svg><span>VarFillet2</span></li>
                    <li class="ghost"><svg class="icon"><use href="#i-ghost"/></svg><span>VarFillet1</span></li>
                    <li class="ghost"><svg class="icon"><use href="#i-ghost"/></svg><span>Fillet1</span></li>
                </ul>
                <div class="hscroll">
                    <svg viewBox="0 0 8 8"><path d="M6 1L3 4l3 3" fill="none" stroke="#444" stroke-width="1.500"/></svg>
                    <div class="track"><div class="thumb"></div></div>
                    <svg viewBox="0 0 8 8"><path d="M2 1l3 3-3 3" fill="none" stroke="#444" stroke-width="1.500"/></svg>
                </div>
                <div class="splitter"><i></i><i></i><i></i></div>
            </aside>
        </main>

        <!-- Model / motion tabs -->
        <div class="model-tabs">
            <div class="nav-buttons">
                <button aria-label="First">|◂</button><button aria-label="Previous">◂</button><button aria-label="Next">▸</button><button aria-label="Last">▸|</button>
            </div>
            <button class="tab active">Model</button>
            <button class="tab">Motion Study 1</button>
        </div>

        <footer class="status">
            <span class="message">Rebuilding. Please wait ...</span>
            <span class="mode">Editing Part</span>
            <span class="units">Custom</span>
            <i class="caret up"></i>
            <span class="status-help">?</span>
            <svg class="icon tag" viewBox="0 0 16 16"><path d="M1 9l7-7h6l1 5-8 8-5-1z" fill="#f3c936" stroke="#86640e"/><circle cx="12" cy="5" r="1.500" fill="#fff" stroke="#86640e"/></svg>
        </footer>

        <!-- Windows taskbar -->
        <div class="taskbar">
            <div class="tasks">
                <button class="open" aria-label="File Explorer"><svg viewBox="0 0 32 32"><path d="M2 4h9l2 3h16v20H2z" fill="#e8cf76" stroke="#c3a44a"/><path d="M5 6h20v5H5z" fill="#fff"/><path d="M8 6v3M14 6v3M20 6v3" stroke="#4c8a4a" stroke-width="2"/><path d="M2 10h28v18H2z" fill="#f6e49a"/><path d="M6 30V19h20v11h-5v-6H11v6z" fill="#8cc9ea" stroke="#5ba3cf"/></svg></button>
                <button aria-label="PowerPoint"><svg viewBox="0 0 32 32"><path d="M3 5l17-3v28L3 26z" fill="#f0cfc4" stroke="#b0583c"/><path d="M9 7h20v22H9z" fill="#f6e4de" stroke="#c15f3c"/><path d="M11 11h16v14H11z" fill="#cb4b23"/><circle cx="16" cy="18" r="4" fill="none" stroke="#fff" stroke-width="2"/><path d="M22 15h4M22 18h4M22 21h4" stroke="#fff"/></svg></button>
                <button aria-label="uTorrent"><svg viewBox="0 0 32 32"><circle cx="16" cy="16" r="14" fill="#168052" stroke="#f2fbf6" stroke-width="2"/><path d="M9 8l4 11q2 4 6 1M18 7l4 12q1 3 4 1M13 18l3 11" fill="none" stroke="#fff" stroke-width="4"/></svg></button>
                <button aria-label="Word"><svg viewBox="0 0 32 32"><path d="M3 5l17-3v28L3 26z" fill="#c7d6ee" stroke="#3d5fa3"/><path d="M11 6h18v22H11z" fill="#f5f8fd" stroke="#7189b8"/><path d="M5 11l3 12 3-9 3 9 3-12" fill="none" stroke="#274b94" stroke-width="2.500"/><path d="M20 11h7M20 15h7M20 19h7M14 24h13" stroke="#5b74ab" stroke-width="1.500"/></svg></button>
                <button aria-label="Player"><svg viewBox="0 0 32 32"><rect x="1" y="1" width="30" height="30" rx="6" fill="#f4bd2b"/><path d="M11 2h10l9 28h-8L16 9l-6 21H2z" fill="#1c1a17"/></svg></button>
                <button aria-label="SolidWorks 2015"><svg class="sw" viewBox="0 0 32 32"><use href="#i-swbox"/><text x="4" y="24">S</text><text x="16" y="24">W</text></svg></button>
                <button aria-label="GoToMeeting"><svg><use href="#i-flower"/></svg></button>
                <button aria-label="Chrome"><svg viewBox="0 0 32 32"><circle cx="16" cy="16" r="14" fill="#f6cb3c"/><path d="M16 16L4 9a14 14 0 0 1 24 1H16z" fill="#d94a3b"/><path d="M4 9a14 14 0 0 0 10 21l7-11-5-3z" fill="#3ea257"/><circle cx="16" cy="16" r="6.500" fill="#fff"/><circle cx="16" cy="16" r="5" fill="#4a88e0"/></svg></button>
                <button aria-label="Paint"><svg viewBox="0 0 32 32"><path d="M3 20q0-12 15-12 11 1 10 8-3 5-8 3-4 0-2 4-2 6-9 5-6-2-6-8z" fill="#d7e9f5" stroke="#8fb3cb"/><circle cx="9" cy="15" r="2.500" fill="#55a355"/><circle cx="15" cy="12" r="2.500" fill="#d65347"/><circle cx="8" cy="21" r="2.500" fill="#4f80c4"/><circle cx="22" cy="13" r="2.500" fill="#9661b1"/><path d="M20 28l8-22" stroke="#ce914d" stroke-width="3"/><path d="M25 8l3-6 3 1-2 6z" fill="#a48a72"/></svg></button>
                <button class="open" aria-label="Viewer"><svg viewBox="0 0 32 32"><rect x="3" y="2" width="26" height="28" rx="2" fill="#fff" stroke="#4865b8" stroke-width="2"/><path d="M6 15q10 0 13-11" fill="none" stroke="#8db3dc" stroke-width="2"/><path d="M6 20q13-2 16-15" fill="none" stroke="#2f6ab1" stroke-width="3"/><path d="M8 26q16-2 18-17l-3 1q-2 12-15 13z" fill="#f0a32c"/></svg></button>
                <button class="open current" aria-label="SolidWorks"><svg class="sw" viewBox="0 0 32 32"><use href="#i-swbox"/><text x="4" y="24">S</text><text x="16" y="24">W</text></svg></button>
                <button class="open" aria-label="GoToMeeting session"><svg><use href="#i-flower"/></svg></button>
            </div>
            <div class="tray">
                <i class="caret up light"></i>
                <svg class="icon" viewBox="0 0 16 16"><path d="M2 2v12h12" fill="none" stroke="#dfe9f4"/><path d="M3 14V8h2v6zM7 14V6h2v8zM11 14V3h2v11z" fill="#5fc065" stroke="#e8f2e8"/></svg>
                <svg class="icon" viewBox="0 0 16 16"><path d="M1 6l7-4 7 4-7 8z" fill="#3aa136" stroke="#1c5a1c"/><path d="M5 7l3 4 3-4z" fill="#f3d24a"/></svg>
                <svg class="icon" viewBox="0 0 16 16"><path d="M7 3h7v12H7zM9 1h3v2M3 2v12M1 3v4h4V3" fill="none" stroke="#fff" stroke-width="1.500"/></svg>
                <svg class="icon" viewBox="0 0 16 16"><path d="M1 1h14v14H1z" fill="#cbd3f1"/><path d="M12 4H5v8h7M5 8h6" fill="none" stroke="#684bac" stroke-width="2"/></svg>
                <svg class="icon" viewBox="0 0 16 16"><path d="M5 5h10v7H5zM8 15h6M11 12v3M1 2h4v4H1zM3 6v8" fill="none" stroke="#fff" stroke-width="1.300"/></svg>
                <svg class="icon" viewBox="0 0 16 16"><path d="M3 1v14" stroke="#fff" stroke-width="1.500"/><path d="M4 2h5v2h5v6H9V8H4z" fill="#fff"/></svg>
                <svg class="icon" viewBox="0 0 16 16"><path d="M1 6h3l4-4v12l-4-4H1z" fill="#fff"/><path d="M10 5q2 3 0 6M12 3q4 5 0 10" fill="none" stroke="#fff"/></svg>
                <span class="lang">ENG</span>
                <div class="clock">8:23 PM<br>10-May-2016</div>
            </div>
        </div>
    </div>
</body>
</html>
```

FILE: styles.css
```css
* {
    box-sizing: border-box;
}

body {
    margin: 0;
    font-family: "Open Sans", "Noto Sans", sans-serif;
    font-size: 11px;
    line-height: 13px;
    color: #2c2c2e;
    background-color: #e0e3e7;
}

button {
    display: flex;
    align-items: center;
    justify-content: center;
    padding: 0;
    border: none;
    background: none;
    font: inherit;
    color: inherit;
    white-space: nowrap;
}

input {
    border: none;
    background: none;
    padding: 0;
    outline: none;
    font: inherit;
}

.sprite {
    position: absolute;
    width: 0;
    height: 0;
}

.icon {
    width: 16px;
    height: 16px;
    flex: none;
}

.icon.small {
    width: 12px;
    height: 12px;
}

/* Small drop-down triangle */
.caret {
    flex: none;
    width: 5px;
    height: 3px;
    background-color: #333;
    clip-path: polygon(0 0, 100% 0, 50% 100%);
}

.caret.up {
    clip-path: polygon(50% 0, 100% 100%, 0 100%);
}

.caret.light {
    background-color: #fff;
}

.app {
    display: flex;
    flex-direction: column;
    height: 100vh;
    overflow: hidden;
}

/* Title bar */
.titlebar {
    display: flex;
    height: 29px;
    flex: none;
    border-top: 3px solid #e4e6ea;
    border-bottom: 1px solid #555;
    background-color: #d3d5d8;
}

.brand {
    display: flex;
    align-items: center;
    gap: 4px;
    width: 123px;
    padding-left: 4px;
    border-left: 4px solid #d9362f;
    background-color: #363b42;
    color: #fff;
    font-style: italic;
    font-size: 13px;
}

.brand-mark {
    width: 20px;
    height: 20px;
    flex: none;
}

.menu {
    display: flex;
    gap: 14px;
    align-items: center;
    width: 468px;
    padding-left: 17px;
    background-color: #a8a9ab;
}

.pin {
    flex: none;
    width: 13px;
    height: 13px;
}

.quick {
    display: flex;
    align-items: center;
    padding-left: 2px;
}

.quick button {
    width: 21px;
    height: 22px;
}

.quick .caret {
    margin: 0 4px;
}

.quick .pressed {
    background-color: #aaacaf;
    border: 1px solid #666;
}

.quick .boxed {
    display: flex;
    align-items: center;
    justify-content: center;
    width: 12px;
    height: 22px;
    border: 1px solid #a5a7aa;
    border-left: none;
}

.doc-title {
    flex: 1;
    align-self: center;
    text-align: center;
}

.search {
    display: flex;
    align-items: center;
    gap: 5px;
    width: 189px;
    height: 22px;
    margin-top: 1px;
    padding: 0 4px;
    border: 1px solid #555;
    background-color: #e9ebee;
}

.search .prompt {
    width: 15px;
    height: 15px;
}

.search input {
    flex: 1;
    min-width: 0;
}

.search input::placeholder {
    color: #777;
}

.win-controls {
    display: flex;
    align-items: center;
    gap: 6px;
    padding: 0 3px 0 5px;
    color: #666;
}

.help-mark {
    width: 16px;
    font-size: 16px;
    font-weight: bold;
}

/* Ribbon */
.ribbon {
    display: flex;
    height: 71px;
    flex: none;
    padding: 3px 0 6px;
    border-bottom: 1px solid #555;
    background-color: #d5d7da;
}

.group {
    display: flex;
    padding: 0 1px 0 4px;
    border-right: 1px solid #6b6b6d;
}

.group:nth-child(3) {
    padding-left: 0;
}

.group:nth-child(n + 4) {
    padding: 0 1px;
}

.group:last-child {
    border-right: none;
}

.big {
    position: relative;
    flex-direction: column;
    justify-content: flex-start;
    width: 48px;
    padding-top: 2px;
}

.big.mid {
    padding-top: 8px;
}

.big.wide {
    width: 59px;
}

.big.narrow {
    width: 38px;
}

.big .caret {
    position: absolute;
    bottom: 5px;
}

.stack {
    display: flex;
    flex-direction: column;
    gap: 5px;
    padding-top: 2px;
}

.stack button {
    justify-content: flex-start;
    gap: 7px;
    height: 16px;
    margin-left: 1px;
}

.stack button .icon {
    width: 15px;
    height: 15px;
}

.stack-xl { width: 130px; }
.stack-l { width: 100px; padding-left: 3px; }
.stack-m { width: 81px; }
.stack-s { width: 60px; padding-left: 3px; }
.stack-r { width: 64px; padding-left: 3px; }

/* Workspace: the tab row and the tree lie over the graphics area */
.workspace {
    display: grid;
    grid-template-columns: 185px 1fr;
    grid-template-rows: 19px 1fr;
    flex: 1;
    min-height: 0;
}

.viewport {
    position: relative;
    grid-area: 1 / 1 / 3 / 3;
    min-height: 0;
    border-right: 1px solid #77777a;
    background:
        radial-gradient(ellipse 480px 340px at 88% 38%, rgba(222, 225, 236, 0.8), rgba(222, 225, 236, 0) 100%),
        linear-gradient(#fdfdfe 0%, #fbfbfd 30%, #e6e8f1 60%, #f8f8fb 70%, #fefefe 80%, #f8f8fb 100%);
}

.model {
    display: block;
    width: 100%;
    height: 100%;
}

.plane-label {
    font-size: 17px;
    font-weight: bold;
    fill: #55dd58;
}

.dimension {
    font-size: 27px;
    fill: #111;
}

.axis {
    font-size: 10px;
}

.top-row {
    display: flex;
    align-items: flex-start;
    grid-area: 1 / 1 / 2 / 3;
    z-index: 1;
}

.cmd-tabs {
    display: grid;
    grid-template-columns: 59px 54px 56px 73px 71px 56px 80px 68px;
}

.cmd-tabs button {
    height: 19px;
    padding-bottom: 2px;
    border: solid #58585a;
    border-width: 0 1px 1px 0;
    background-color: #a5a6a8;
}

.cmd-tabs .active {
    border-bottom-color: #dfe1e5;
    background-color: #dfe1e5;
    font-weight: bold;
    color: #222;
}

.heads-up {
    display: flex;
    align-items: center;
    height: 27px;
    margin-left: 71px;
}

.heads-up button {
    width: 22px;
}

.heads-up .caret {
    margin: 0 3px 0 4px;
    background-color: #666;
}

.doc-controls {
    display: flex;
    gap: 7px;
    align-items: center;
    height: 27px;
    margin-left: auto;
    padding-right: 10px;
    color: #888;
}

.doc-controls .icon {
    width: 15px;
    height: 15px;
}

/* Feature manager */
.sidebar {
    position: relative;
    z-index: 1;
    grid-area: 2 / 1 / 3 / 2;
    display: flex;
    flex-direction: column;
    min-height: 0;
    padding-top: 7px;
    border-right: 2px solid #737478;
    border-bottom: 2px solid #8a8b8f;
    background-color: #e0e3e7;
}

.side-tabs {
    display: flex;
    height: 21px;
    align-items: center;
}

.side-tabs button {
    width: 26px;
    height: 20px;
    border: 1px solid #555;
    border-left: none;
    background-color: #a5a6a8;
}

.side-tabs .active {
    border-bottom: none;
    background-color: #e0e3e7;
}

.more {
    margin-left: auto;
    padding: 0 4px 4px 0;
    font-size: 16px;
}

.filter {
    display: flex;
    align-items: center;
    gap: 4px;
    height: 17px;
    margin-top: 1px;
    padding-left: 7px;
    border: 1px solid #9a9b9e;
    background-color: #eef0f4;
}

.filter input {
    flex: 1;
    min-width: 0;
}

.tree {
    display: grid;
    grid-auto-rows: 1fr;
    height: 286px;
    margin: 3px 0 0;
    padding: 0;
    list-style: none;
    overflow: hidden;
}

.tree li {
    position: relative;
    display: flex;
    align-items: center;
    gap: 4px;
    padding-left: 19px;
    white-space: nowrap;
}

.tree .root {
    padding-left: 1px;
}

/* Dotted guides of the tree */
.tree li:not(.root)::before {
    content: "";
    position: absolute;
    top: 0;
    bottom: 0;
    left: 10px;
    border-left: 1px dotted #999;
}

.tree li:not(.root)::after {
    content: "";
    position: absolute;
    left: 10px;
    width: 8px;
    border-top: 1px dotted #999;
}

.tree li:last-child::before {
    bottom: 50%;
}

.tree li.plus::after {
    content: "+";
    left: 6px;
    width: 9px;
    height: 9px;
    border: 1px solid #999;
    background-color: #eceef1;
    font-size: 9px;
    line-height: 7px;
    text-align: center;
}

.tree .selected span {
    background-color: #3d97e8;
    color: #fff;
}

.tree .ghost {
    color: #999;
}

.rollback {
    border-top: 2px solid #4668a8;
}

.note-letter {
    font-family: "Liberation Serif", serif;
    font-size: 12px;
    font-weight: bold;
    fill: #222;
}

.hscroll {
    display: flex;
    align-items: center;
    height: 16px;
    margin-top: auto;
    background-color: #eff0f2;
}

.hscroll svg {
    width: 11px;
    height: 10px;
    margin: 0 2px;
}

.track {
    flex: 1;
    height: 14px;
}

.thumb {
    width: 63%;
    height: 100%;
    background-color: #c8c9cb;
}

.splitter {
    position: absolute;
    top: 238px;
    right: -9px;
    display: flex;
    flex-direction: column;
    align-items: center;
    justify-content: space-evenly;
    width: 9px;
    height: 36px;
    border: 1px solid #555;
    border-left: none;
    background-color: #e0e3e7;
}

.splitter i {
    width: 3px;
    height: 4px;
    background-color: #333;
    clip-path: polygon(100% 0, 100% 100%, 0 50%);
}

/* Things floating over the graphics area */
.confirm {
    position: absolute;
    top: 27px;
    right: 38px;
    display: flex;
    align-items: flex-end;
    gap: 5px;
}

.confirm-exit {
    width: 32px;
    height: 36px;
    margin-bottom: 18px;
}

.confirm-cancel {
    width: 24px;
    height: 24px;
}

.task-pane {
    position: absolute;
    top: 56px;
    right: 0;
    display: grid;
    grid-auto-rows: 1fr;
    width: 22px;
    height: 135px;
}

.task-pane button {
    border: 1px solid #555;
    border-right: none;
    background-color: #a9aaac;
}

.task-pane button + button {
    border-top: none;
}

.task-pane .active {
    background-color: #e4e6ea;
}

.meeting {
    position: absolute;
    top: 195px;
    right: 0;
    display: flex;
    flex-direction: column;
    align-items: center;
    width: 42px;
    height: 277px;
    background-color: #343c49;
}

.grip {
    width: 38px;
    height: 8px;
    margin: 6px 0 3px;
    background: repeating-linear-gradient(90deg, #596070 0 1px, #343c49 1px 3px);
}

.meeting button {
    height: 36px;
    flex: none;
}

.meeting svg {
    width: 20px;
    height: 20px;
}

.meeting .round {
    width: 28px;
    height: 28px;
    margin: 5px 0 6px;
    border: 1px solid #a9afb8;
    border-radius: 50%;
    background-color: #68707d;
}

.meeting .on {
    border-color: #6fdca0;
    background-color: #14a765;
}

.meeting .flat {
    height: 27px;
}

.meeting .flat svg {
    width: 24px;
}

/* Bottom tabs */
.model-tabs {
    display: flex;
    height: 16px;
    flex: none;
    border-top: 1px solid #8a8b8f;
    border-bottom: 1px solid #8a8b8f;
    background-color: #dfe1e4;
}

.nav-buttons {
    display: flex;
    width: 64px;
    padding-left: 2px;
    background-color: #b1b2b4;
    color: #8b8c8e;
    font-size: 9px;
}

.nav-buttons button {
    width: 15px;
    border-right: 1px solid #8b8c8e;
}

.tab {
    width: 98px;
    padding-bottom: 1px;
    border-right: 2px solid #666;
    border-bottom: 1px solid #666;
    background-color: #a8a9ab;
}

.tab.active {
    width: 53px;
    border: solid #333;
    border-width: 0 1px 1px;
    background-color: #e3e5e9;
    font-weight: bold;
    color: #222;
}

/* Status bar */
.status {
    display: flex;
    align-items: center;
    height: 16px;
    flex: none;
    padding: 0 5px 0 114px;
    background-color: #d5d7da;
}

.mode {
    margin-left: auto;
    margin-right: 47px;
}

.units {
    margin-right: 15px;
}

.status-help {
    width: 13px;
    height: 13px;
    margin: 0 47px 0 16px;
    border: 1px solid #3a8a52;
    background-color: #d5f0dc;
    color: #208040;
    font-weight: bold;
    line-height: 11px;
    text-align: center;
}

.status .tag {
    width: 15px;
    height: 15px;
}

/* Taskbar */
.taskbar {
    display: flex;
    justify-content: space-between;
    height: 38px;
    flex: none;
    background-color: #4c85c0;
    color: #fff;
}

.tasks {
    display: flex;
    gap: 4px;
    padding: 0 0 1px 16px;
}

.tasks button {
    width: 54px;
}

.tasks svg {
    width: 30px;
    height: 30px;
}

.tasks .open {
    border: 1px solid #83a9d3;
    background-color: #6c98ca;
}

.tasks .current {
    border-color: #d0def0;
    background-color: #9ab5d8;
}

.sw {
    font-family: "Liberation Sans", sans-serif;
    font-size: 14px;
    font-weight: bold;
    fill: #fff;
}

.tray {
    display: flex;
    align-items: center;
    gap: 8px;
    padding-right: 23px;
}

.tray .icon {
    width: 15px;
    height: 15px;
}

.tray .caret {
    margin-right: 4px;
}

.lang {
    margin: 0 7px 0 4px;
}

.clock {
    line-height: 16px;
    text-align: center;
}
```
